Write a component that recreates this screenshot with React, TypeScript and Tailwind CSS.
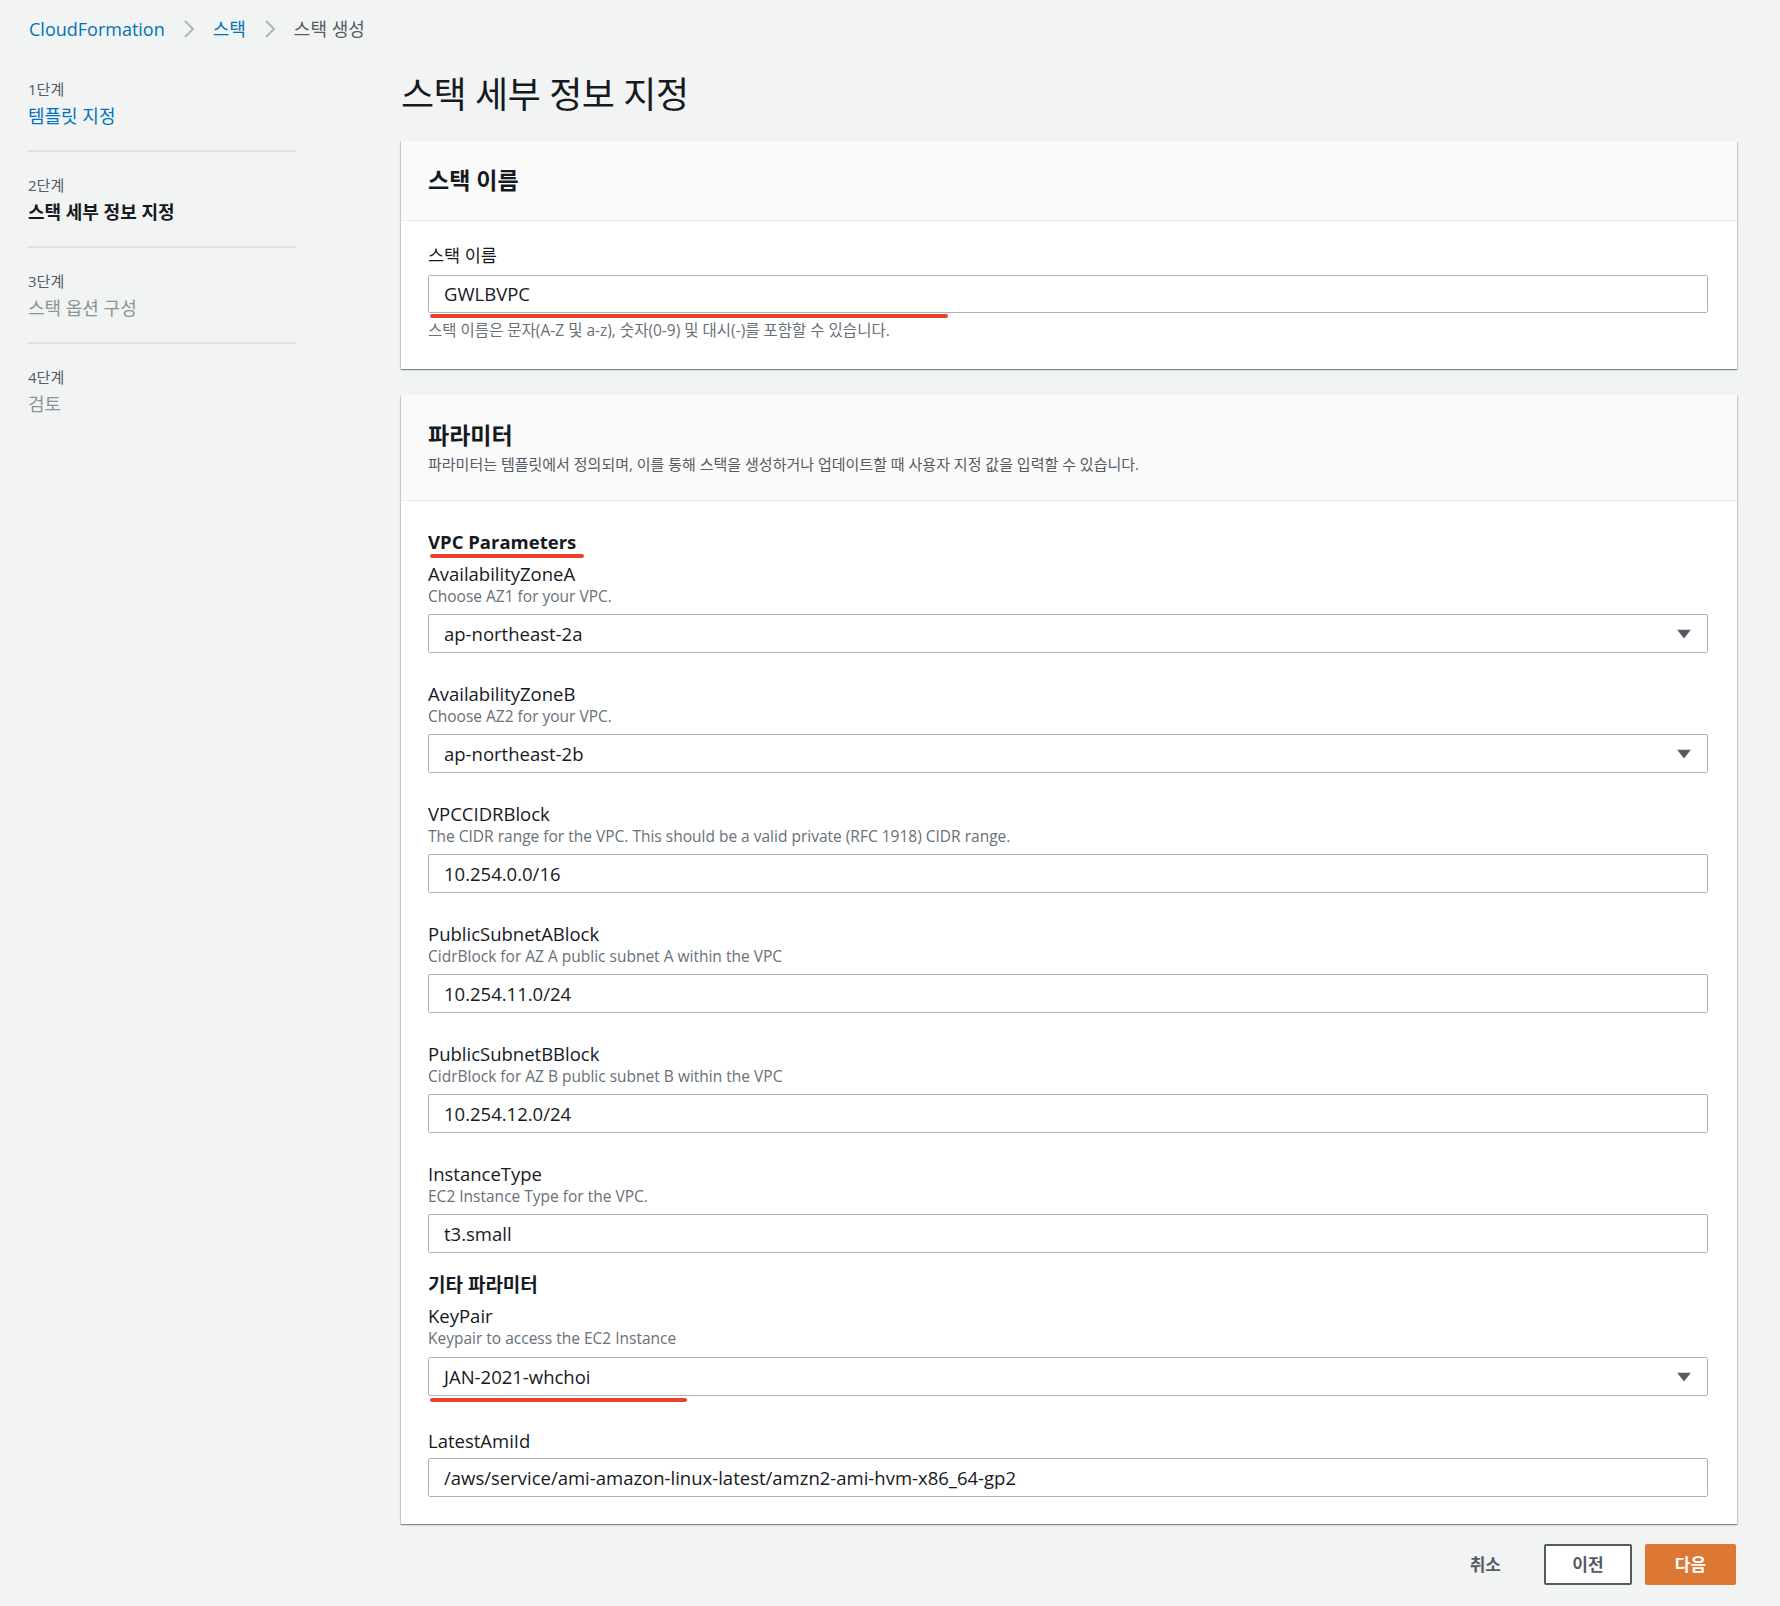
import React from "react";

interface Field {
  name: string;
  desc?: string;
  value: string;
  select?: boolean;
  mark?: number;
}

const vpcFields: Field[] = [
  { name: "AvailabilityZoneA", desc: "Choose AZ1 for your VPC.", value: "ap-northeast-2a", select: true },
  { name: "AvailabilityZoneB", desc: "Choose AZ2 for your VPC.", value: "ap-northeast-2b", select: true },
  {
    name: "VPCCIDRBlock",
    desc: "The CIDR range for the VPC. This should be a valid private (RFC 1918) CIDR range.",
    value: "10.254.0.0/16",
  },
  { name: "PublicSubnetABlock", desc: "CidrBlock for AZ A public subnet A within the VPC", value: "10.254.11.0/24" },
  { name: "PublicSubnetBBlock", desc: "CidrBlock for AZ B public subnet B within the VPC", value: "10.254.12.0/24" },
  { name: "InstanceType", desc: "EC2 Instance Type for the VPC.", value: "t3.small" },
];

const steps = [
  { step: "1단계", title: "템플릿 지정", state: "done" },
  { step: "2단계", title: "스택 세부 정보 지정", state: "active" },
  { step: "3단계", title: "스택 옵션 구성", state: "todo" },
  { step: "4단계", title: "검토", state: "todo" },
];

const Chevron = () => (
  <svg width="12" height="20" viewBox="0 0 12 20" className="mx-[18px]">
    <polyline points="2,2 10,10 2,18" fill="none" stroke="#aab7b8" strokeWidth="2" />
  </svg>
);

const Caret = () => (
  <svg width="14" height="9" viewBox="0 0 14 9" className="absolute right-[17px] top-1/2 -translate-y-1/2">
    <polygon points="0,0 14,0 7,9" fill="#545b64" />
  </svg>
);

// red annotation stroke drawn over the screenshot
const Mark = ({ width, top }: { width: number; top: number }) => (
  <div
    className="absolute left-[2px] h-[4px] rounded-full bg-[#e8412c]"
    style={{ width, top }}
  />
);

const Input = ({ value, select, mark }: { value: string; select?: boolean; mark?: number }) => (
  <div className="relative">
    <div className="flex h-[39px] items-center rounded-[2px] border border-[#aab7b8] bg-white px-[15px] text-[18.5px] text-[#16191f]">
      {value}
    </div>
    {select && <Caret />}
    {mark && <Mark width={mark} top={41} />}
  </div>
);

const FieldGroup = ({ field, className = "" }: { field: Field; className?: string }) => (
  <div className={className}>
    <div className="h-[22px] text-[18.5px] leading-[22px]">{field.name}</div>
    {field.desc && <div className="h-[22px] text-[15.5px] leading-[22px] text-[#687078]">{field.desc}</div>}
    <div className={field.desc ? "mt-[7px]" : "mt-[7px]"}>
      <Input value={field.value} select={field.select} mark={field.mark} />
    </div>
  </div>
);

const Panel = ({ children }: { children: React.ReactNode }) => (
  <div className="bg-white shadow-[0_1px_1px_0_rgba(0,28,36,0.3),1px_1px_1px_0_rgba(0,28,36,0.15),-1px_1px_1px_0_rgba(0,28,36,0.15)]">
    {children}
  </div>
);

export default function App() {
  return (
    <div className="min-h-[1606px] bg-[#f2f3f3] pt-[17px] font-['Open_Sans','Noto_Sans_CJK_KR',sans-serif] text-[#16191f]">
      {/* Breadcrumb */}
      <nav className="flex h-[24px] items-center pl-[29px] text-[18px]">
        <span className="text-[#0073bb]">CloudFormation</span>
        <Chevron />
        <span className="text-[#0073bb]">스택</span>
        <Chevron />
        <span className="text-[#545b64]">스택 생성</span>
      </nav>

      <div className="mt-[32px] flex pl-[28px]">
        {/* Wizard steps */}
        <aside className="w-[268px] pt-[6px]">
          {steps.map((s, i) => (
            <div key={s.step}>
              {i > 0 && <div className="mb-[23px] mt-[22px] h-[2px] bg-[#dde1e1]" />}
              <div className="h-[20px] text-[15px] leading-[20px] text-[#545b64]">{s.step}</div>
              <div
                className={
                  "mt-[5px] h-[24px] text-[18px] leading-[24px] " +
                  (s.state === "done"
                    ? "text-[#0073bb]"
                    : s.state === "active"
                    ? "font-bold text-[#16191f]"
                    : "text-[#879596]")
                }
              >
                {s.title}
              </div>
            </div>
          ))}
        </aside>

        {/* Main */}
        <main className="ml-[105px] w-[1336px]">
          <h1 className="h-[40px] text-[36px] leading-[44px] tracking-[-0.5px]">스택 세부 정보 지정</h1>

          <div className="mt-[28px]">
            <Panel>
              <div className="flex h-[80px] items-center border-b border-[#eaeded] bg-[#fafafa] px-[27px]">
                <h2 className="text-[23px] font-bold">스택 이름</h2>
              </div>
              <div className="pb-[29px] pl-[27px] pr-[29px] pt-[23px]">
                <div className="h-[22px] text-[17.5px] leading-[22px]">스택 이름</div>
                <div className="mt-[9px]">
                  <div className="relative">
                    <div className="flex h-[38px] items-center rounded-[2px] border border-[#aab7b8] bg-white px-[15px] text-[18.5px]">
                      GWLBVPC
                    </div>
                    <Mark width={518} top={39} />
                  </div>
                </div>
                <div className="mt-[7px] h-[20px] text-[15.5px] leading-[20px] text-[#687078]">
                  스택 이름은 문자(A-Z 및 a-z), 숫자(0-9) 및 대시(-)를 포함할 수 있습니다.
                </div>
              </div>
            </Panel>
          </div>

          <div className="mt-[26px]">
            <Panel>
              <div className="h-[106px] border-b border-[#eaeded] bg-[#fafafa] px-[27px] pt-[26px]">
                <h2 className="h-[28px] text-[23px] font-bold leading-[28px]">파라미터</h2>
                <p className="mt-[5px] h-[20px] text-[15px] leading-[20px] text-[#545b64]">
                  파라미터는 템플릿에서 정의되며, 이를 통해 스택을 생성하거나 업데이트할 때 사용자 지정 값을 입력할 수
                  있습니다.
                </p>
              </div>

              <div className="pb-[27px] pl-[27px] pr-[29px] pt-[29px]">
                <div className="relative inline-block h-[24px] text-[18.5px] font-bold leading-[24px]">
                  VPC Parameters
                  <Mark width={154} top={24} />
                </div>

                {vpcFields.map((f, i) => (
                  <FieldGroup key={f.name} field={f} className={i === 0 ? "mt-[8px]" : "mt-[30px]"} />
                ))}

                <div className="mt-[20px] h-[24px] text-[19px] font-bold leading-[24px]">기타 파라미터</div>
                <div className="mt-[8px]">
                  <div className="h-[22px] text-[18.5px] leading-[22px]">KeyPair</div>
                  <div className="h-[22px] text-[15.5px] leading-[22px] text-[#687078]">
                    Keypair to access the EC2 Instance
                  </div>
                  <div className="mt-[8px]">
                    <Input value="JAN-2021-whchoi" select mark={257} />
                  </div>
                </div>

                <div className="mt-[34px]">
                  <div className="h-[22px] text-[18.5px] leading-[22px]">LatestAmiId</div>
                  <div className="mt-[6px]">
                    <Input value="/aws/service/ami-amazon-linux-latest/amzn2-ami-hvm-x86_64-gp2" />
                  </div>
                </div>
              </div>
            </Panel>
          </div>

          {/* Actions */}
          <div className="mt-[20px] flex items-center justify-end pr-[1px]">
            <button className="mr-[43px] text-[17px] font-bold text-[#545b64]">취소</button>
            <button className="h-[41px] w-[88px] rounded-[2px] border-2 border-[#545b64] bg-white text-[17px] font-bold text-[#545b64]">
              이전
            </button>
            <button className="ml-[13px] h-[41px] w-[91px] rounded-[2px] bg-[#dd7834] text-[17px] font-bold text-white">
              다음
            </button>
          </div>
        </main>
      </div>
    </div>
  );
}
